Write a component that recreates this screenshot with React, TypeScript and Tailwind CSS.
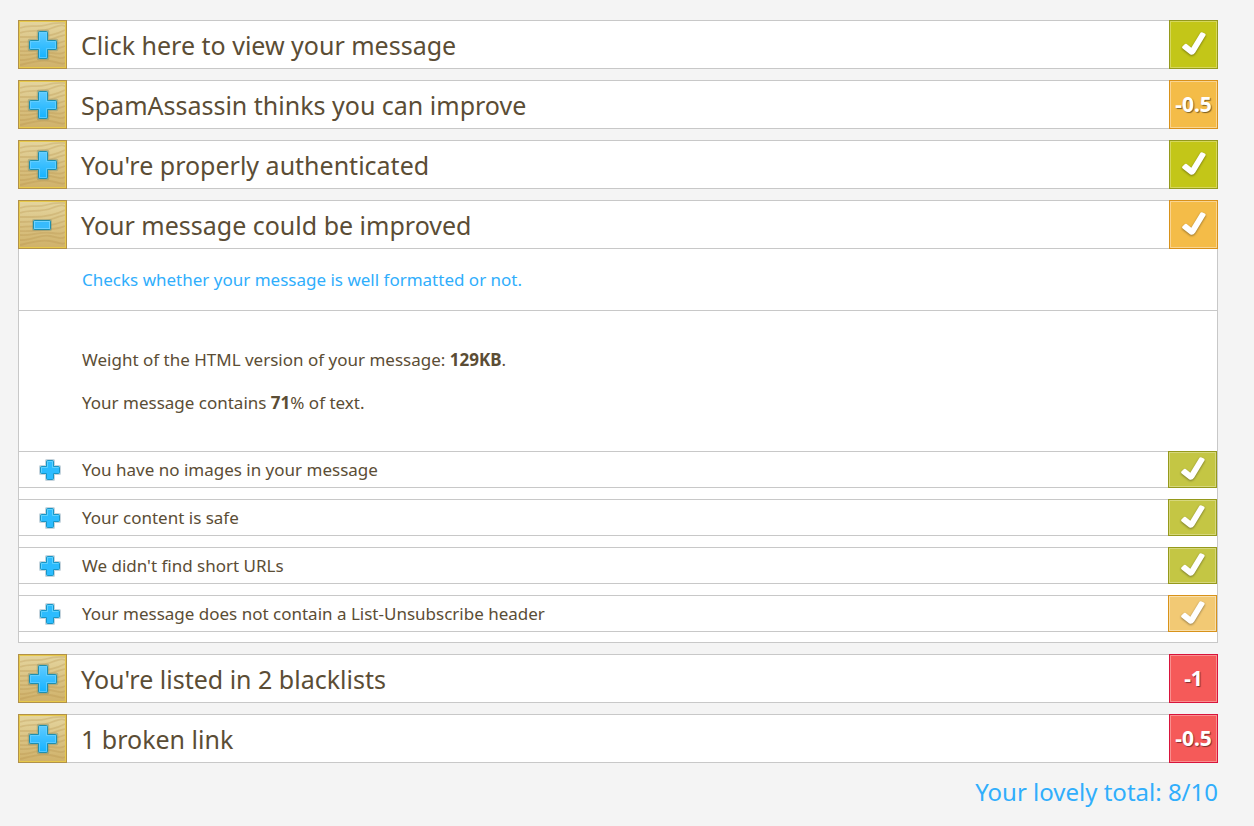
import { useId } from "react";
import type { ReactNode } from "react";

type Tone = "green" | "orange" | "red";

type Check = {
  title: string;
  tone: Tone;
  score?: string;
  open?: boolean;
};

const tones: Record<Tone, string> = {
  green: "border-[#95991c] bg-[#c3c618] inset-ring-[#d5d75c]",
  orange: "border-[#d8921a] bg-[#f4bc48] inset-ring-[#fad490]",
  red: "border-[#d8143c] bg-[#f55a59] inset-ring-[#f98f8e]",
};

const softTones: Record<Tone, string> = {
  green: "border-[#95991c] bg-[#c4c644] inset-ring-[#d6d77c]",
  orange: "border-[#d8921a] bg-[#f2c974] inset-ring-[#f8dfac]",
  red: "border-[#d8143c] bg-[#f57a79] inset-ring-[#f9a5a4]",
};

const checksBefore: Check[] = [
  { title: "Click here to view your message", tone: "green" },
  { title: "SpamAssassin thinks you can improve", tone: "orange", score: "-0.5" },
  { title: "You're properly authenticated", tone: "green" },
];

const checksAfter: Check[] = [
  { title: "You're listed in 2 blacklists", tone: "red", score: "-1" },
  { title: "1 broken link", tone: "red", score: "-0.5" },
];

const details: Check[] = [
  { title: "You have no images in your message", tone: "green" },
  { title: "Your content is safe", tone: "green" },
  { title: "We didn't find short URLs", tone: "green" },
  { title: "Your message does not contain a List-Unsubscribe header", tone: "orange" },
];

function Tick() {
  return (
    <svg
      viewBox="0 0 26 26"
      className="h-[26px] w-[26px] drop-shadow-[0_1px_1px_rgba(0,0,0,0.4)]"
      aria-hidden="true"
    >
      <path
        d="M1.4 14.4 4 12.1Q5.2 11.3 6.3 12.4L10.3 15.7 19 1.4Q20 -.1 21.6 .5L23.8 1.5Q25.2 2.2 24.3 3.8L14.2 20.6Q11.8 23.9 9 22.2L2 16.7Q.5 15.5 1.4 14.4Z"
        fill="#fff"
      />
    </svg>
  );
}

function WoodTile({ open }: { open?: boolean }) {
  const id = useId();
  return (
    <svg viewBox="0 0 49 49" className="h-[49px] w-[49px] shrink-0" aria-hidden="true">
      <defs>
        <linearGradient id={`${id}wood`} x1="0" y1="0" x2="0" y2="1">
          <stop offset="0" stopColor="#e5d6a0" />
          <stop offset="1" stopColor="#cfb068" />
        </linearGradient>
        <linearGradient id={`${id}blue`} x1="0" y1="0" x2="0" y2="1">
          <stop offset="0" stopColor="#5fcbff" />
          <stop offset="1" stopColor="#14b2ff" />
        </linearGradient>
      </defs>
      <rect width="49" height="49" fill={`url(#${id}wood)`} />
      <g fill="none" stroke="#b08c48" strokeOpacity="0.27" strokeWidth="1.8">
        <path d="M2 8C12 4 18 8 28 5S42 3 47 3" />
        <path d="M2 13C12 9 22 13 34 8S44 6 47 6" />
        <path d="M2 17H14C24 17 36 16 47 10" />
        <path d="M2 22C14 21 24 23 34 19S44 16 47 15" />
        <path d="M2 27C14 25 26 29 47 21" />
        <path d="M2 31C12 32 24 30 34 29S44 27 47 26" />
        <path d="M2 35C14 36 22 31 34 33S44 33 47 32" />
        <path d="M2 40C14 41 22 34 32 36S43 39 47 37" />
        <path d="M2 45C12 43 20 39 32 41S43 45 47 43" />
      </g>
      <rect x="1.5" y="1.5" width="46" height="46" fill="none" stroke="#e6c84a" />
      <rect x="0.5" y="0.5" width="48" height="48" fill="none" stroke="#b1914a" />
      {open ? (
        <g>
          <rect x="14" y="19" width="20" height="12" rx="2" fill="#6d8a76" fillOpacity="0.4" />
          <rect x="15.5" y="20.5" width="17" height="9" rx="1" fill="#37bbfc" stroke="#1e8fae" />
          <rect x="16.5" y="21.5" width="15" height="7" fill="none" stroke="#6cd2ff" />
        </g>
      ) : (
        <g strokeLinejoin="round">
          <path
            d="M20.5 11.5H29.5V20.5H38.5V29.5H29.5V38.5H20.5V29.5H11.5V20.5H20.5Z"
            fill="none"
            stroke="#6d8a76"
            strokeOpacity="0.4"
            strokeWidth="3.5"
          />
          <path
            d="M21.5 11.5H28.5Q29.5 11.5 29.5 12.5V20.5H37.5Q38.5 20.5 38.5 21.5V28.5Q38.5 29.5 37.5 29.5H29.5V37.5Q29.5 38.5 28.5 38.5H21.5Q20.5 38.5 20.5 37.5V29.5H12.5Q11.5 29.5 11.5 28.5V21.5Q11.5 20.5 12.5 20.5H20.5V12.5Q20.5 11.5 21.5 11.5Z"
            fill={`url(#${id}blue)`}
            stroke="#1e8fae"
          />
          <path
            d="M21.5 12.5H28.5V21.5H37.5V28.5H28.5V37.5H21.5V28.5H12.5V21.5H21.5Z"
            fill="none"
            stroke="#6cd2ff"
            strokeOpacity="0.7"
          />
        </g>
      )}
    </svg>
  );
}

function SmallPlus() {
  return (
    <svg viewBox="0 0 24 24" className="h-6 w-6" strokeLinejoin="round" aria-hidden="true">
      <path
        d="M8.5 2.5H15.5V8.5H21.5V15.5H15.5V21.5H8.5V15.5H2.5V8.5H8.5Z"
        fill="none"
        stroke="#7f9fb4"
        strokeOpacity="0.45"
        strokeWidth="3"
      />
      <path
        d="M9.5 2.5H14.5Q15.5 2.5 15.5 3.5V8.5H20.5Q21.5 8.5 21.5 9.5V14.5Q21.5 15.5 20.5 15.5H15.5V20.5Q15.5 21.5 14.5 21.5H9.5Q8.5 21.5 8.5 20.5V15.5H3.5Q2.5 15.5 2.5 14.5V9.5Q2.5 8.5 3.5 8.5H8.5V3.5Q8.5 2.5 9.5 2.5Z"
        fill="#2cbcff"
        stroke="#1796c6"
      />
      <path
        d="M9.5 9.5V3.5H14.5V9.5H20.5M9.5 9.5H3.5V14.5"
        fill="none"
        stroke="#6ad6ff"
        strokeOpacity="0.8"
      />
    </svg>
  );
}

function Badge({ tone, score }: { tone: Tone; score?: string }) {
  return (
    <span
      className={`flex w-[49px] shrink-0 items-center justify-center self-stretch border inset-ring text-[21px] font-bold text-white text-shadow-[1px_1px_1px_rgba(0,0,0,0.5)] ${tones[tone]}`}
    >
      {score ?? <Tick />}
    </span>
  );
}

function CheckRow({ title, tone, score, open, children }: Check & { children?: ReactNode }) {
  return (
    <section>
      <h2>
        <button type="button" aria-expanded={!!open} className="flex h-[49px] w-full items-center text-left">
          <WoodTile open={open} />
          <span className="flex min-w-0 flex-1 items-center self-stretch border-y border-[#c8c8c8] bg-white pt-0.5 pl-3.5 text-[25px]">
            {title}
          </span>
          <Badge tone={tone} score={score} />
        </button>
      </h2>
      {children}
    </section>
  );
}

function DetailRow({ title, tone }: Check) {
  return (
    <li>
      <button type="button" aria-expanded={false} className="flex h-[37px] w-full items-center text-left">
        <span className="flex min-w-0 flex-1 items-center self-stretch border-y border-[#c8c8c8] pl-[19px]">
          <SmallPlus />
          <span className="pl-5">{title}</span>
        </span>
        <span
          className={`flex w-[49px] shrink-0 items-center justify-center self-stretch border inset-ring ${softTones[tone]}`}
        >
          <Tick />
        </span>
      </button>
    </li>
  );
}

export default function App() {
  return (
    <div className="min-h-screen bg-[#f4f4f4] pt-5 pr-9 pb-3 pl-[18px] font-['Noto_Sans',sans-serif] text-[#5b4d35]">
      <main className="flex flex-col gap-[11px]">
        {checksBefore.map((check) => (
          <CheckRow key={check.title} {...check} />
        ))}

        <CheckRow title="Your message could be improved" tone="orange" open>
          <div className="border-x border-b border-[#c8c8c8] bg-white pb-2.5 text-[17px] leading-6">
            <p className="border-b border-[#c8c8c8] pt-[19px] pb-[18px] pl-[63px] text-[#30aefc]">
              Checks whether your message is well formatted or not.
            </p>
            <div className="flex flex-col gap-[19px] pt-[37px] pb-9 pl-[63px]">
              <p>
                Weight of the HTML version of your message: <strong>129KB</strong>.
              </p>
              <p>
                Your message contains <strong>71</strong>% of text.
              </p>
            </div>
            <ul className="flex flex-col gap-[11px]">
              {details.map((detail) => (
                <DetailRow key={detail.title} {...detail} />
              ))}
            </ul>
          </div>
        </CheckRow>

        {checksAfter.map((check) => (
          <CheckRow key={check.title} {...check} />
        ))}

        <p className="pt-0.5 text-right text-2xl text-[#30aefc]">Your lovely total: 8/10</p>
      </main>
    </div>
  );
}
